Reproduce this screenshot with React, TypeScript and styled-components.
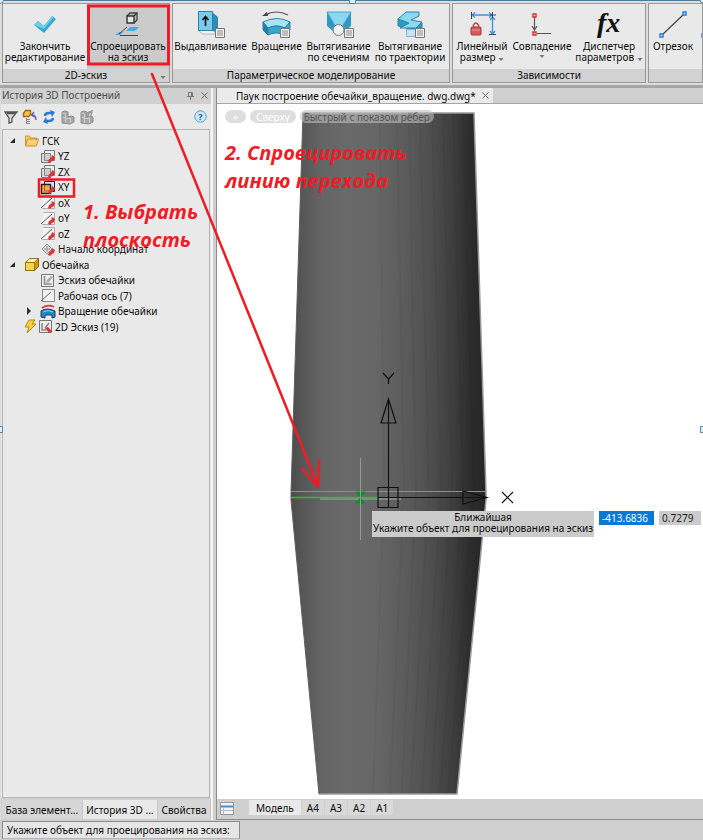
import React from "react";
import styled, { createGlobalStyle, css } from "styled-components";

const Global = createGlobalStyle`
  * { box-sizing: border-box; }
  body { margin: 0; background: #cfcfcf; }
  button, input { font: inherit; color: inherit; margin: 0; }
  button { border: 0; padding: 0; background: none; cursor: default; }
`;

const Page = styled.div`
  position: relative;
  display: flex;
  flex-direction: column;
  min-height: 100vh;
  overflow: hidden;
  background: #cfcfcf;
  color: #0c0c0c;
  font-family: "Noto Sans", "Open Sans", sans-serif;
  font-size: 10px;
  line-height: 12px;
`;

/* ---------- Ribbon ---------- */

const Ribbon = styled.header`
  display: flex;
  gap: 2px;
  padding: 2px 0 2px 2px;
  overflow: hidden;
  background: #dcdcdc;
  border-top: 1px solid #4d7b9c;
  border-bottom: 3px solid #a6a6a6;
`;

const Group = styled.section<{ $width: number; $grow?: boolean }>`
  flex: ${(p) => (p.$grow ? 1 : 0)} 0 ${(p) => p.$width}px;
  min-width: 0;
  display: flex;
  flex-direction: column;
  height: 80px;
  border: 1px solid #999;
  background: #e9e9e9;
`;

const GroupBody = styled.div<{ $start?: boolean }>`
  flex: 1;
  display: flex;
  justify-content: ${(p) => (p.$start ? "flex-start" : "center")};
  overflow: hidden;
`;

const GroupTitle = styled.div`
  display: flex;
  justify-content: center;
  position: relative;
  height: 13px;
  background: #d2d2d2;
`;

const Corner = styled.span`
  position: absolute;
  right: 3px;
`;

const RibbonButton = styled.button<{ $width: number; $active?: boolean }>`
  flex: none;
  width: ${(p) => p.$width}px;
  display: flex;
  flex-direction: column;
  align-items: center;
  padding-top: 4px;
  line-height: 11px;
  white-space: nowrap;
  ${(p) => p.$active && css`background: #cbcbcb;`}
`;

const Icon = styled.svg.attrs({ viewBox: "0 0 32 32" })`
  flex: none;
  width: 32px;
  height: 32px;
  margin-bottom: 1px;
`;

const CaretMark = styled.svg`
  flex: none;
  vertical-align: middle;
  margin-top: 2px;
`;

const Caret = () => (
  <CaretMark width="6" height="5" viewBox="0 0 6 5">
    <path d="M0.500 1h5L3 4z" fill="#777" />
  </CaretMark>
);

/* ---------- Work area ---------- */

const Work = styled.main`
  flex: 1;
  display: flex;
  min-height: 0;
`;

const Panel = styled.aside`
  width: 213px;
  flex: none;
  display: flex;
  flex-direction: column;
  background: #e9e9e9;
  border-left: 1px solid #dcdcdc;
  border-right: 2px solid #f4f4f4;
`;

const PanelHead = styled.div`
  display: flex;
  align-items: center;
  gap: 5px;
  height: 16px;
  padding: 0 2px 2px 1px;
  background: #d0d0d0;
  color: #4c4c4c;
  span { flex: 1; }
  button { display: flex; }
`;

const Tools = styled.div`
  display: flex;
  align-items: center;
  gap: 3px;
  height: 25px;
  padding: 0 4px 0 2px;
  button { display: flex; }
  button:last-child { margin-left: auto; }
`;

const Tree = styled.ul`
  flex: 1;
  display: grid;
  grid-auto-rows: 15px 16px;
  align-content: start;
  margin: 0 1px;
  padding: 3px 0 0;
  list-style: none;
  border: 1px solid #b5b5b5;
  background: #e9e9e9;
`;

const Node = styled.li<{ $level: number }>`
  display: flex;
  align-items: center;
  padding-left: ${(p) => [5, 21][p.$level]}px;
`;

const Twist = styled.button`
  width: 16px;
  height: 12px;
  flex: none;
  display: flex;
  align-items: center;
`;

const Gap = styled.span`
  width: 16px;
  flex: none;
`;

const NodeButton = styled.button`
  display: flex;
  align-items: center;
  gap: 2px;
  white-space: nowrap;
  svg { flex: none; }
`;

const PanelTabs = styled.div`
  display: flex;
  height: 22px;
  padding: 2px 0 1px 1px;
  background: #cfcfcf;
`;

const PanelTab = styled.button<{ $active?: boolean }>`
  flex: 1 1 auto;
  padding: 0 3px;
  white-space: nowrap;
  border-right: 1px solid #c8c8c8;
  background: ${(p) => (p.$active ? "#e9e9e9" : "#d6d6d6")};
`;

const Document = styled.section`
  flex: 1;
  min-width: 0;
  margin-left: 3px;
  display: flex;
  flex-direction: column;
  border-left: 1px solid #8d8d8d;
  border-bottom: 1px solid #8d8d8d;
`;

const FileBar = styled.div`
  display: flex;
  height: 16px;
  background: #cfcfcf;
  border-bottom: 1px solid #a5a5a5;
`;

const FileTab = styled.div`
  display: flex;
  align-items: center;
  gap: 5px;
  padding: 0 3px 0 19px;
  background: #ebebeb;
  white-space: nowrap;
  button { display: flex; }
`;

const View = styled.div`
  position: relative;
  flex: 1;
  min-height: 695px;
  overflow: hidden;
  background: #fff;
`;

const Scene = styled.svg`
  position: absolute;
  left: 0;
  top: 0;
`;

const ViewPills = styled.div`
  position: relative;
  display: flex;
  gap: 4px;
  padding: 6px 8px;
`;

const Pill = styled.button<{ $dark?: boolean }>`
  min-width: 21px;
  height: 13px;
  padding: 0 ${(p) => (p.$dark ? 4 : 6)}px;
  line-height: 12px;
  border-radius: 7px;
  white-space: nowrap;
  background: ${(p) => (p.$dark ? "rgba(190,190,190,.6)" : "#dedede")};
  color: ${(p) => (p.$dark ? "#565656" : "#fff")};
`;

const Prompt = styled.div`
  position: absolute;
  left: 155px;
  top: 407px;
  display: flex;
  align-items: flex-start;
  gap: 5px;
`;

const Hint = styled.div`
  padding: 1px 1px 3px;
  background: #cbcbcb;
  text-align: center;
  line-height: 11px;
  white-space: nowrap;
`;

const Coord = styled.input<{ $width: number; $selected?: boolean }>`
  width: ${(p) => p.$width}px;
  height: 14px;
  padding: 0 3px;
  border: 0;
  background: ${(p) => (p.$selected ? "#0a78d6" : "#cbcbcb")};
  color: ${(p) => (p.$selected ? "#fff" : "#222")};
`;

const Sheets = styled.div`
  display: flex;
  align-items: stretch;
  height: 20px;
  padding: 1px 0 4px 3px;
  background: #cfcfcf;
  gap: 1px;
`;

const SheetList = styled.button`
  display: flex;
  align-items: center;
  margin-right: 14px;
`;

const Sheet = styled.button<{ $active?: boolean }>`
  padding: 0 ${(p) => (p.$active ? 7 : 5)}px;
  background: ${(p) => (p.$active ? "#e9e9e9" : "#d9d9d9")};
`;

const Status = styled.footer`
  display: flex;
  padding: 1px 2px;
  height: 20px;
`;

const Command = styled.div`
  width: 238px;
  padding: 2px 4px;
  border: 1px solid #8d8d8d;
  border-bottom-color: #b5b5b5;
  background: #e6e6e6;
`;

/* ---------- Annotations ---------- */

const Marks = styled.svg`
  position: absolute;
  left: 0;
  top: 0;
  pointer-events: none;
`;

const Note = styled.p<{ $x: number; $y: number }>`
  position: absolute;
  left: ${(p) => p.$x}px;
  top: ${(p) => p.$y}px;
  margin: 0;
  color: #ee1c25;
  font-family: "Open Sans", "Noto Sans", sans-serif;
  font-size: 20px;
  font-weight: 700;
  font-style: italic;
  line-height: 28px;
  white-space: nowrap;
  pointer-events: none;
`;

/* ---------- Icons ---------- */

const Sheetlet = ({ x, y }: { x: number; y: number }) => (
  <g transform={`translate(${x} ${y})`}>
    <path d="M.5 .5h9v9h-9z" fill="#f4f4f4" stroke="#777" />
    <path d="M2 3h6M2 5h6M2 7h6" stroke="#888" />
  </g>
);

const CheckIcon = () => (
  <Icon>
    <path d="M5 17l4-4 6 5 8-10 4 3-12 14z" fill="#36a7d2" />
    <path d="M5 17l4-4 6 5 8-10 2 1-10 12z" fill="#70cdea" />
  </Icon>
);

const ProjectIcon = () => (
  <Icon>
    <path d="M15 8l3-3h7v7l-3 3" fill="#bbb" stroke="#444" strokeWidth="1.300" />
    <path d="M15 8h7v7h-7zM22 8l3-3" fill="#e4e4e4" stroke="#333" strokeWidth="1.400" />
    <path d="M3 27l4-3h4l-3 3zM18 19h9l-4 4h-9z" fill="#49a9e8" />
    <path d="M7 26l8-7M8 27.500h18" stroke="#444" />
  </Icon>
);

const ExtrudeIcon = () => (
  <Icon>
    <path d="M4 23l4 3h12v-5H4z" fill="#f4f4f4" stroke="#aab8d0" />
    <path d="M17 4l6 5v15l-6-1z" fill="#2b8db8" />
    <path d="M3.500 3.500h14v19h-14z" fill="#78cdec" stroke="#2d83a6" />
    <path d="M10.500 18V9M7.500 12l3-3.500 3 3.500" fill="none" stroke="#111" strokeWidth="1.600" />
    <Sheetlet x={20} y={20} />
  </Icon>
);

const RevolveIcon = () => (
  <Icon>
    <path d="M4 7q11-6 23 0" fill="none" stroke="#555" strokeWidth="1.200" />
    <path d="M1 8l5-4 1 4z" fill="#444" />
    <path d="M2 14q14-7 27 0l-5 6q-8-4-17 0z" fill="#a9e4f6" stroke="#2d83a6" />
    <path d="M2 14l5 6v7l-5-5z" fill="#1f7fa9" stroke="#2d83a6" />
    <path d="M7 20q8-4 17 0l5-6v8l-5 5q-9-4-17 0z" fill="#38a6cf" stroke="#2d83a6" />
    <Sheetlet x={19} y={20} />
  </Icon>
);

const LoftIcon = () => (
  <Icon>
    <path d="M4 4h24v14l-7 6h-10l-7-6z" fill="#2f98c4" />
    <path d="M4 4h24l-9 15h-6z" fill="#8bd8f1" stroke="#4aa5c5" />
    <circle cx="15.500" cy="22" r="5.500" fill="#f0f0f0" stroke="#777" />
    <Sheetlet x={21} y={20} />
  </Icon>
);

const SweepIcon = () => (
  <Icon>
    <path d="M4 11v7l10 2v-8z" fill="#2f98c4" stroke="#2d83a6" />
    <path d="M13 20l5-5h10v6l-5 5h-10z" fill="#2f98c4" stroke="#2d83a6" />
    <path d="M12 4h13v4l-8 4 11 2-6 6H6l9-5-11-4z" fill="#8bd8f1" stroke="#2d83a6" />
    <path d="M12.500 21.500h9v7h-9z" fill="#c9e2f4" stroke="#86b4dd" />
    <Sheetlet x={21} y={20} />
  </Icon>
);

const DimensionIcon = () => (
  <Icon>
    <path d="M6 7h20M9 4.500L6 7l3 2.500M23 4.500L26 7l-3 2.500M26.500 9v17M24 12l2.500-3 2.500 3M24 23l2.500 3 2.500-3" fill="none" stroke="#3b91e6" strokeWidth="1.300" />
    <path d="M5.500 4v7M26.500 4v6M24 7h6M23 26.500h7" stroke="#444" />
    <path d="M7.500 19v-2q2-4 5 0v2" fill="none" stroke="#b9474b" strokeWidth="1.500" />
    <rect x="5" y="19" width="10" height="8" rx="1" fill="#d8595d" stroke="#a23b3f" />
    <path d="M6 22h8" stroke="#ec9494" />
  </Icon>
);

const CoincideIcon = () => (
  <Icon>
    <path d="M8.500 9v12M6 18l2.500 4 2.500-4M11 25.500h14" fill="none" stroke="#555" strokeWidth="1.200" />
    <path d="M7 6h3v3H7zM7 24h3v3H7z" fill="#fff" stroke="#d12c31" strokeWidth="1.400" />
  </Icon>
);

const FxIcon = () => (
  <Icon>
    <text x="4" y="24" fontFamily="Liberation Serif, serif" fontSize="28" fontWeight="700" fontStyle="italic" fill="#111">fx</text>
  </Icon>
);

const LineIcon = () => (
  <Icon>
    <path d="M5 27L27 6" stroke="#444" strokeWidth="1.200" />
    <path d="M3 26h3v3H3zM26 4h3v3h-3z" fill="#fff" stroke="#2076df" strokeWidth="1.400" />
  </Icon>
);

const PolylineIcon = () => (
  <Icon>
    <path d="M6 27L18 8L28 20" fill="none" stroke="#444" strokeWidth="1.200" />
    <path d="M5 26h3v3H5z" fill="#fff" stroke="#2076df" strokeWidth="1.400" />
  </Icon>
);

const CloseIcon = () => (
  <svg width="9" height="9" viewBox="0 0 9 9">
    <path d="M1.500 1.500l6 6M7.500 1.500l-6 6" stroke="#666" />
  </svg>
);

const PinIcon = () => (
  <svg width="9" height="9" viewBox="0 0 9 9">
    <path d="M2.500 5.500v-4h4v4M1 5.500h7M4.500 5.500V9M5.500 2v3" fill="none" stroke="#777" />
  </svg>
);

const Block = () => (
  <>
    <path d="M2 3l3-1 3 1v5l3-1 3 1v5l-4 2-8-1z" fill="#a8a8a8" stroke="#8c8c8c" />
    <path d="M2.500 4l3 1v9M5.500 10l5-1v5M3 8l2 1" fill="none" stroke="#cfcfcf" />
  </>
);

const RedPin = () => <path d="M8 13l1-3 2-1 1-3 3 2-1 3-2 1-2 2z" fill="#df3439" />;

const nodeIcons: Record<string, React.ReactNode> = {
  folder: <path d="M1.500 13V3h4l1 2h6v2M1.500 13l2-7h11l-2 7z" fill="#f9cf79" stroke="#cf902e" />,
  plane: (
    <>
      <path d="M4.500 1.500h10v10h-10z" fill="#ededed" stroke="#777" />
      <path d="M1.500 4.500h9v9h-9z" fill="#dadada" stroke="#777" />
      <path d="M4.500 4.500h6v7h-6z" fill="#cfcfcf" stroke="#888" />
      <RedPin />
    </>
  ),
  planeActive: (
    <>
      <path d="M4.500 1.500h10v10h-10z" fill="#cae8fb" stroke="#222" />
      <path d="M1.500 4.500h9v9h-9z" fill="#f7a955" stroke="#222" strokeWidth="1.400" />
      <path d="M4.500 5v6h6" fill="none" stroke="#a85d14" />
      <RedPin />
    </>
  ),
  axis: (
    <>
      <path d="M3.500 1.500h11v12h-12" fill="#f3f3f3" stroke="#aaa" />
      <path d="M1 13L12 3" stroke="#555" />
      <RedPin />
    </>
  ),
  origin: (
    <>
      <path d="M7 2l5 5-5 5-5-5z" fill="#ddd" stroke="#999" />
      <path d="M7 4v6M4 7h6" stroke="#999" />
      <RedPin />
    </>
  ),
  body: (
    <>
      <path d="M1.500 5.500l4-4h9v8l-4 4h-9z" fill="#d9960f" stroke="#84600b" />
      <path d="M1.500 5.500l4-4h9l-4 4z" fill="#fff2a5" stroke="#9a7110" />
      <path d="M1.500 5.500h9v8h-9z" fill="#fdd441" stroke="#9a7110" />
    </>
  ),
  sketch: (
    <>
      <path d="M1.500 1.500h12v12h-12z" fill="#eee" stroke="#777" />
      <path d="M4.500 3v8h7" fill="none" stroke="#888" strokeWidth="1.500" />
      <path d="M6 10l1-3 4-4 2 1-4 5z" fill="#aaa" />
    </>
  ),
  workAxis: (
    <>
      <path d="M2.500 1.500h12v12h-12z" fill="#f1f1f1" stroke="#888" />
      <path d="M1 13L11 4" stroke="#666" />
    </>
  ),
  revolve: (
    <>
      <path d="M2 4q6-4 12-1" fill="none" stroke="#e2343b" strokeWidth="1.800" />
      <path d="M1 7q6-4 14 0v6l-3 1v-3H5v3l-4-1z" fill="#2585c4" stroke="#153e63" />
      <path d="M3 8q5-3 10 0" fill="none" stroke="#8bd2ef" />
    </>
  ),
};

const NodeIcon = ({ name }: { name: string }) =>
  name === "sketch2d" ? (
    <svg width="29" height="15" viewBox="0 0 29 15">
      <path d="M5 1h6L8 5h4L3 14l2-6H1z" fill="#fbd23d" stroke="#b28a14" />
      <path d="M15.500 1.500h12v12h-12z" fill="#eee" stroke="#777" />
      <path d="M18 4v7h4M21 9l4-5" fill="none" stroke="#888" strokeWidth="1.500" />
      <path d="M21 9l3-1 4 4-3 2z" fill="#df3439" />
    </svg>
  ) : (
    <svg width="16" height="15" viewBox="0 0 16 15">{nodeIcons[name]}</svg>
  );

/* ---------- Data ---------- */

type TreeItem = { label: string; icon: string; level: number; open?: boolean };

const tree: TreeItem[] = [
  { label: "ГСК", icon: "folder", level: 0, open: true },
  { label: "YZ", icon: "plane", level: 1 },
  { label: "ZX", icon: "plane", level: 1 },
  { label: "XY", icon: "planeActive", level: 1 },
  { label: "oX", icon: "axis", level: 1 },
  { label: "oY", icon: "axis", level: 1 },
  { label: "oZ", icon: "axis", level: 1 },
  { label: "Начало координат", icon: "origin", level: 1 },
  { label: "Обечайка", icon: "body", level: 0, open: true },
  { label: "Эскиз обечайки", icon: "sketch", level: 1 },
  { label: "Рабочая ось (7)", icon: "workAxis", level: 1 },
  { label: "Вращение обечайки", icon: "revolve", level: 1, open: false },
  { label: "2D Эскиз (19)", icon: "sketch2d", level: 0 },
];

const shades: [number, string][] = [
  [0, "#4b4b4b"], [6, "#575757"], [16, "#646464"], [28, "#6a6a6a"], [44, "#666"],
  [60, "#5a5a5a"], [72, "#4e4e4e"], [83, "#3e3e3e"], [92, "#2c2c2c"], [100, "#262626"],
];

const Model = () => (
  <Scene width="486" height="695" viewBox="217 104 486 695">
    <defs>
      <linearGradient id="shell">
        {shades.map(([at, color]) => <stop key={at} offset={`${at}%`} stopColor={color} />)}
      </linearGradient>
    </defs>
    <path d="M303 113H474L486 492V500L457 794H319L291 500V492z" fill="url(#shell)" />
    <path d="M380 114L384 492L373 793M397 114L404 492L390 793M409 114L416 492L402 793M420 114L429 492L411 793M432 114L441 492L422 793M443 114L452 492L431 793M453 114L463 492L440 793M463 114L474 492L448 793" fill="none" stroke="#000" strokeOpacity=".04" strokeWidth="2" />
    <path d="M303 113H474L486 492V500L457 794H319" fill="none" stroke="#999" strokeWidth="1.500" />
    <path d="M319 794L291 500V492L303 113" fill="none" stroke="#5e5e5e" />
    <path d="M291 491.500H486" stroke="#8e8e8e" />
    <path d="M320 499H401" stroke="#a9a9a9" />
    <path d="M291 497.500H378" stroke="#1fc52d" strokeWidth="1.400" />
    <path d="M355 491.500h11l-4.500 5h-2zM359.500 498.500h2l4.500 5h-11z" fill="#0f8f20" />
    <path d="M360.500 458V540" stroke="#979797" />
    <g fill="none" stroke="#111" strokeWidth="1.200">
      <path d="M388.500 398V508M378 497.500H487M378 487.500h20v20h-20zM381 423l7.500-24 7.500 24zM463 491v13l24-6.500z" />
      <path d="M383 373l5.500 6 5.500-6M388.500 379v5M502 492l11 11M513 492l-11 11" />
    </g>
  </Scene>
);

export default function App() {
  return (
    <>
      <Global />
      <Page>
        <Ribbon>
          <Group $width={168}>
            <GroupBody>
              <RibbonButton $width={84}><CheckIcon /><span>Закончить</span><span>редактирование</span></RibbonButton>
              <RibbonButton $width={82} $active><ProjectIcon /><span>Спроецировать</span><span>на эскиз</span></RibbonButton>
            </GroupBody>
            <GroupTitle>2D-эскиз<Corner><Caret /></Corner></GroupTitle>
          </Group>
          <Group $width={278}>
            <GroupBody>
              <RibbonButton $width={74}><ExtrudeIcon /><span>Выдавливание</span></RibbonButton>
              <RibbonButton $width={58}><RevolveIcon /><span>Вращение</span></RibbonButton>
              <RibbonButton $width={66}><LoftIcon /><span>Вытягивание</span><span>по сечениям</span></RibbonButton>
              <RibbonButton $width={77}><SweepIcon /><span>Вытягивание</span><span>по траектории</span></RibbonButton>
            </GroupBody>
            <GroupTitle>Параметрическое моделирование</GroupTitle>
          </Group>
          <Group $width={194}>
            <GroupBody>
              <RibbonButton $width={56}><DimensionIcon /><span>Линейный</span><span>размер <Caret /></span></RibbonButton>
              <RibbonButton $width={64}><CoincideIcon /><span>Совпадение</span><Caret /></RibbonButton>
              <RibbonButton $width={70}><FxIcon /><span>Диспетчер</span><span>параметров <Caret /></span></RibbonButton>
            </GroupBody>
            <GroupTitle>Зависимости</GroupTitle>
          </Group>
          <Group $width={50} $grow>
            <GroupBody $start>
              <RibbonButton $width={48}><LineIcon /><span>Отрезок</span></RibbonButton>
              <RibbonButton $width={32} aria-label="Полилиния"><PolylineIcon /></RibbonButton>
            </GroupBody>
            <GroupTitle />
          </Group>
        </Ribbon>

        <Work>
          <Panel>
            <PanelHead>
              <span>История 3D Построений</span>
              <button aria-label="Закрепить"><PinIcon /></button>
              <button aria-label="Закрыть панель"><CloseIcon /></button>
            </PanelHead>
            <Tools>
              <button aria-label="Фильтр">
                <svg width="16" height="16" viewBox="0 0 16 16"><path d="M2 3h12l-5 6v4l-3 1V9zM4 4.500h8" fill="#ddd" stroke="#555" strokeWidth="1.300" /></svg>
              </button>
              <button aria-label="Перенести">
                <svg width="16" height="16" viewBox="0 0 16 16">
                  <path d="M1.500 4.500l2-3h5v4l-2 2h-5z" fill="#fbc546" stroke="#a6650f" strokeWidth="1.400" />
                  <path d="M4.500 9v6M4 10.500h4M4 12.500h4M4 14.500h4" stroke="#888" />
                  <path d="M14 11q0-5-4-5M12 3L9.500 6l3 2" fill="none" stroke="#7055b5" strokeWidth="1.400" />
                </svg>
              </button>
              <button aria-label="Обновить">
                <svg width="16" height="16" viewBox="0 0 16 16">
                  <path d="M4 7q0-3 4-3h2M5 12h3q4 0 4-3" fill="none" stroke="#2879d4" strokeWidth="2.400" />
                  <path d="M9 1l5 2-3 5zM7 15l-5-2 3-5z" fill="#2879d4" />
                </svg>
              </button>
              <button aria-label="Тело"><svg width="16" height="16" viewBox="0 0 16 16"><Block /></svg></button>
              <button aria-label="Тело с вырезом"><svg width="16" height="16" viewBox="0 0 16 16"><Block /><path d="M8 4l5-2-1 5M12 3q-3 1-3 4" fill="none" stroke="#999" strokeWidth="1.400" /></svg></button>
              <button aria-label="Справка">
                <svg width="13" height="13" viewBox="0 0 13 13">
                  <circle cx="6.500" cy="6.500" r="5.700" fill="#cdeafb" stroke="#4c9fcc" />
                  <text x="6.500" y="10" textAnchor="middle" fontSize="9" fontWeight="700" fill="#245c82">?</text>
                </svg>
              </button>
            </Tools>
            <Tree>
              {tree.map((n) => (
                <Node key={n.label} $level={n.level}>
                  {n.open === undefined ? <Gap /> : (
                    <Twist aria-label={`${n.open ? "Свернуть" : "Развернуть"} ${n.label}`}>
                      {n.open
                        ? <svg width="8" height="8" viewBox="0 0 8 8"><path d="M7 1v5H2z" fill="#222" /></svg>
                        : <svg width="8" height="8" viewBox="0 0 8 8"><path d="M3 0l4 4-4 4z" fill="#333" /></svg>}
                    </Twist>
                  )}
                  <NodeButton><NodeIcon name={n.icon} /><span>{n.label}</span></NodeButton>
                </Node>
              ))}
            </Tree>
            <PanelTabs>
              <PanelTab>База элемент...</PanelTab>
              <PanelTab $active>История 3D ...</PanelTab>
              <PanelTab>Свойства</PanelTab>
            </PanelTabs>
          </Panel>

          <Document>
            <FileBar>
              <FileTab>Паук построение обечайки_вращение. dwg.dwg*<button aria-label="Закрыть файл"><CloseIcon /></button></FileTab>
            </FileBar>
            <View>
              <Model />
              <ViewPills>
                <Pill>+</Pill>
                <Pill>Сверху</Pill>
                <Pill $dark>Быстрый с показом рёбер</Pill>
              </ViewPills>
              <Prompt>
                <Hint>Ближайшая<br />Укажите объект для проецирования на эскиз</Hint>
                <Coord aria-label="X" $width={55} $selected defaultValue="-413.6836" />
                <Coord aria-label="Y" $width={42} defaultValue="0.7279" />
              </Prompt>
            </View>
            <Sheets>
              <SheetList aria-label="Список листов">
                <svg width="14" height="14" viewBox="0 0 14 14">
                  <path d="M.5 1.500h13v12H.5z" fill="#f2f2f2" stroke="#999" />
                  <path d="M1 5.500h12" stroke="#3b91dc" strokeWidth="2" />
                  <path d="M1 9.500h12M3.500 7v6" stroke="#bbb" />
                </svg>
              </SheetList>
              <Sheet $active>Модель</Sheet>
              {["A4", "A3", "A2", "A1"].map((s) => <Sheet key={s}>{s}</Sheet>)}
            </Sheets>
          </Document>
        </Work>

        <Status><Command>Укажите объект для проецирования на эскиз:</Command></Status>

        <Note $x={83} $y={198}>1. Выбрать<br />плоскость</Note>
        <Note $x={225} $y={139}>2. Спроецировать<br />линию перехода</Note>
        <Marks width="703" height="840" viewBox="0 0 703 840">
          <g fill="none" stroke="#ee1c25">
            <path d="M88.500 6h80v58h-80z" strokeWidth="3" />
            <path d="M39 179.500h35v17H39z" strokeWidth="2.500" />
            <path d="M152 74L318 486M302 469l16 18 1-26" strokeWidth="2.500" strokeLinecap="round" strokeLinejoin="round" />
          </g>
          <g fill="#d9f1fa" stroke="#56899f">
            <path d="M349.500-2.500h6v6h-6zM-3.500 426.500h6v6h-6zM700.500 426.500h6v6h-6z" />
            <circle cx="0" cy="0" r="3.500" />
            <circle cx="703" cy="0" r="3" />
          </g>
        </Marks>
      </Page>
    </>
  );
}
